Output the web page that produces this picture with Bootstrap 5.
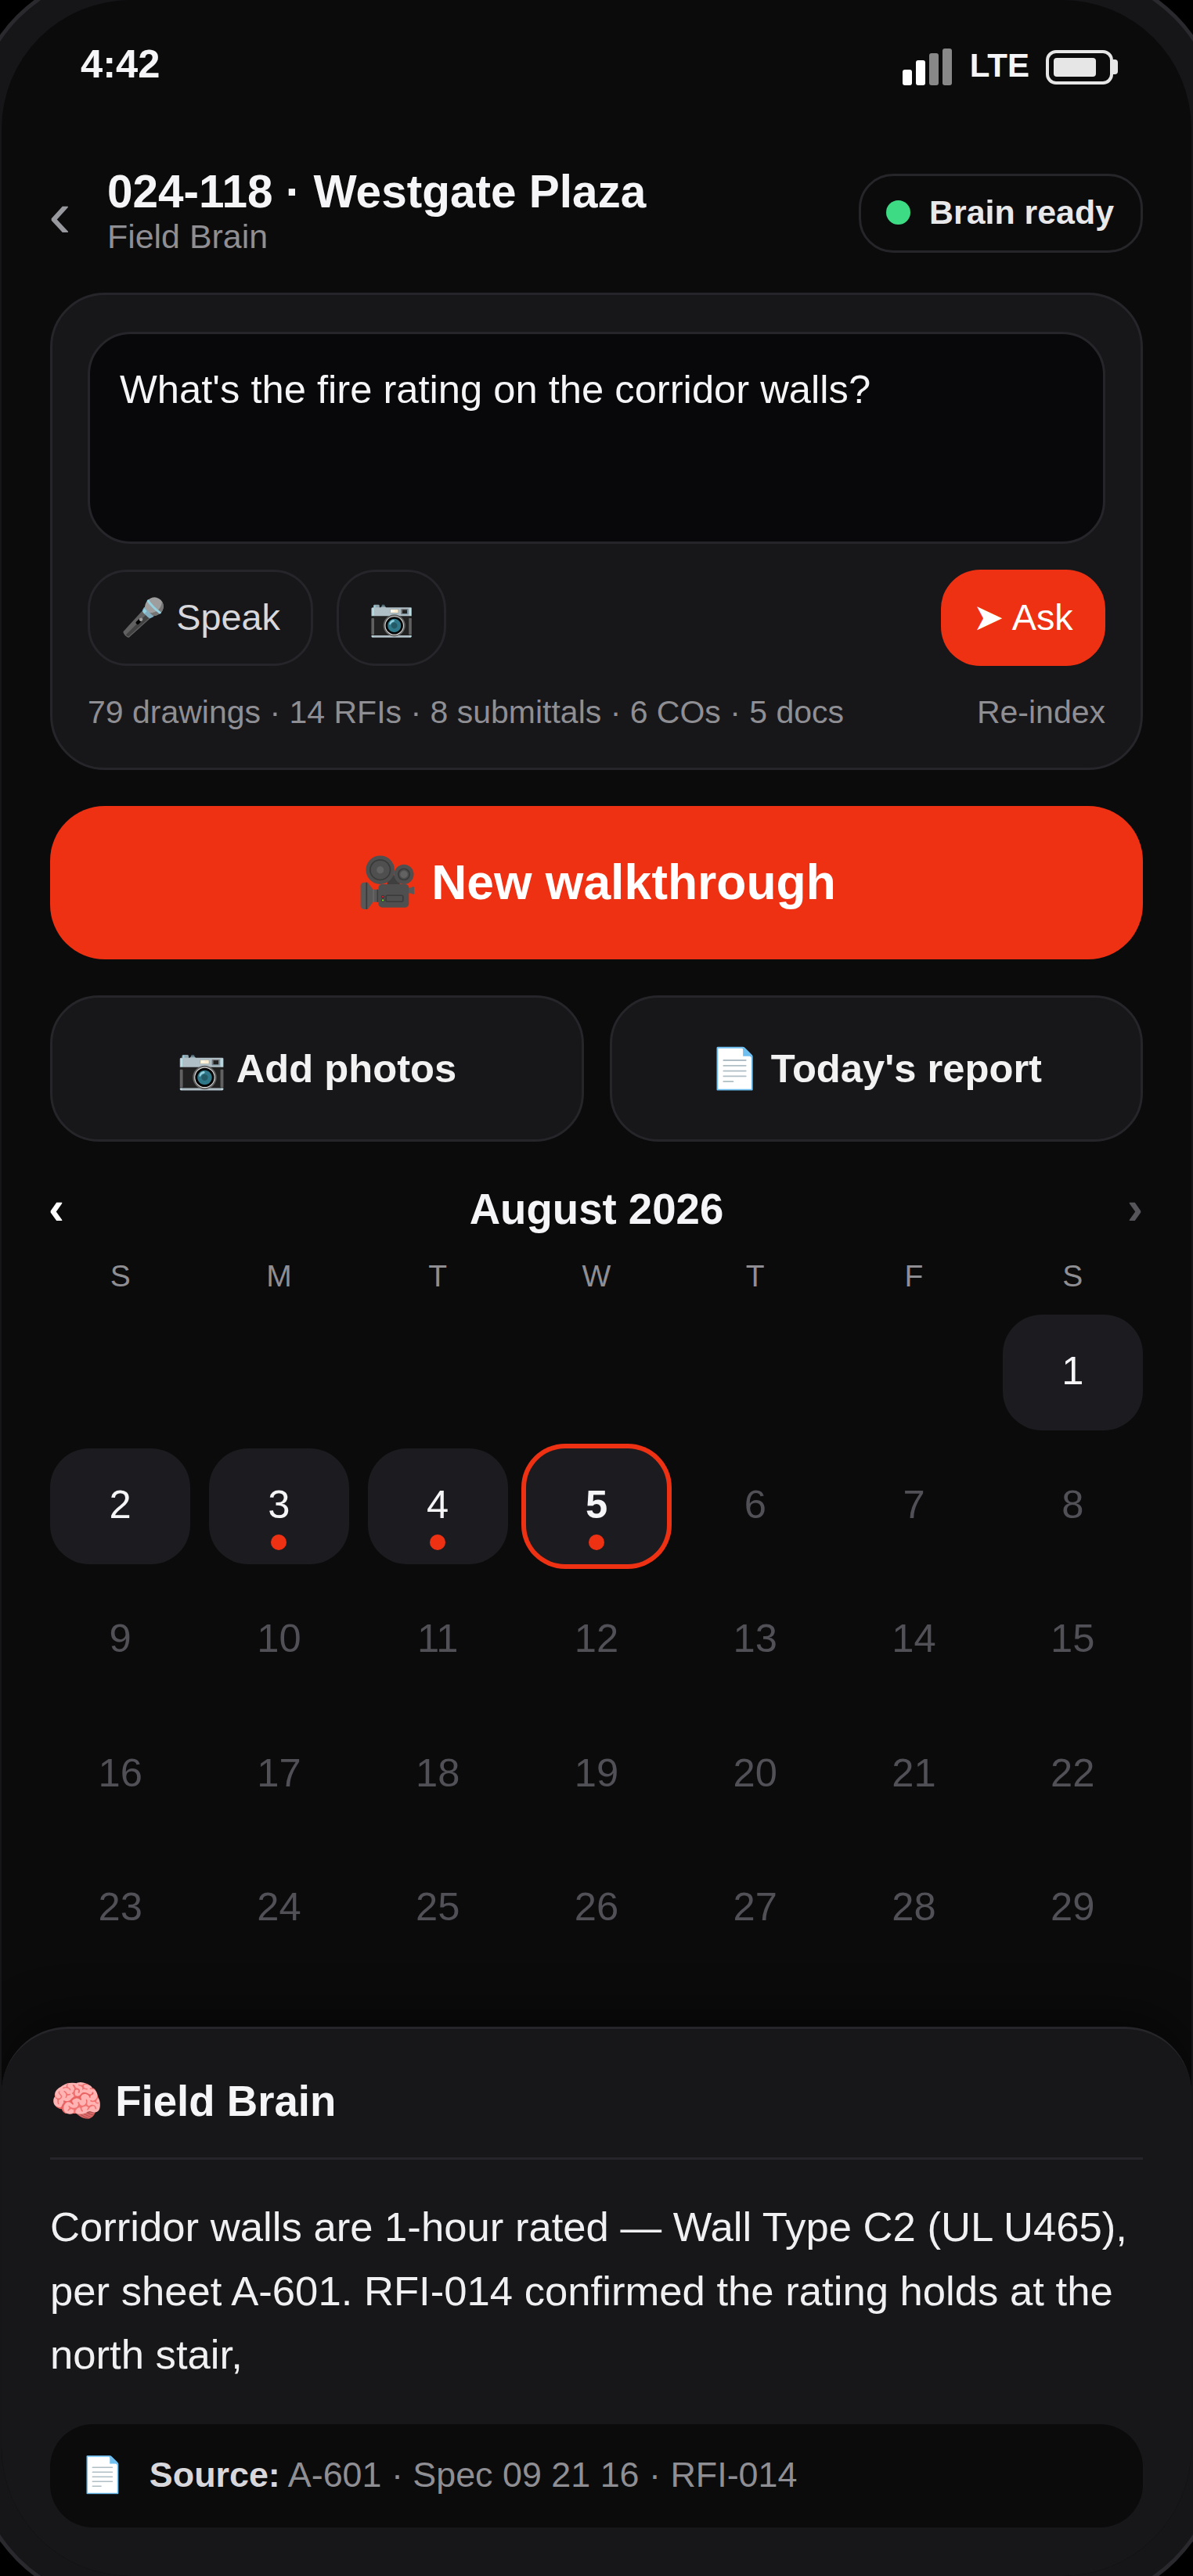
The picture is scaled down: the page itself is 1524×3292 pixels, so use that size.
<!DOCTYPE html>
<html lang="en">
<head>
    <meta charset="UTF-8">
    <meta name="viewport" content="width=device-width, initial-scale=1.0">
    <title>Field Brain</title>
    <link href="https://cdn.jsdelivr.net/npm/bootstrap@5.3.0/dist/css/bootstrap.min.css" rel="stylesheet">
    <style>
        html, body { height: 100%; overflow: hidden; }
        body {
            background: #000;
            color: #f5f5f7;
            font-family: "Liberation Sans", "Noto Color Emoji", sans-serif;
        }
        /* phone shell: the rim runs off the edges of the picture */
        .phone {
            width: 1520px;
            height: 3292px;
            background: #0b0b0c;
            border-radius: 165px;
            overflow: hidden;
            box-shadow: 0 0 0 36px #161619, 0 0 0 41px #2a2a2e;
        }
        .page-pad { padding: 0 62px; }

        /* status bar */
        .status-bar { height: 222px; padding: 55px 94px 0 101px; }
        .clock { font-size: 50.7px; font-weight: 700; line-height: 58px; margin-top: -2px; color: #f5f5f7; }
        .status-right { margin-top: 7px; }
        .signal { height: 47px; gap: 5px; margin-right: 23px; }
        .signal i { width: 12px; background: #fff; border-radius: 3px; }
        .signal i.off { background: #888; }
        .net { font-size: 42px; font-weight: 700; line-height: 50px; margin: -4px 21px 0 0; color: #f5f5f7; }
        .batt { width: 86px; height: 44px; border: 4px solid #e6e6e6; border-radius: 13px; padding: 6px; }
        .batt i { display: block; width: 54px; height: 24px; background: #e6e6e6; border-radius: 4px; }
        .batt-nub { width: 6px; height: 19px; background: #e6e6e6; border-radius: 0 4px 4px 0; }

        /* header */
        .head-row { height: 101px; margin-bottom: 51px; }
        .back-arrow { width: 73px; font-size: 86px; line-height: 86px; color: #98989f; margin: 0 2px 0 -2px; }
        .proj-name { font-size: 58.5px; font-weight: 700; line-height: 68px; margin-top: -8px; }
        .proj-sub { font-size: 42.9px; line-height: 50px; margin-top: -2px; color: #8e8e93; }
        .brain-pill {
            height: 101px;
            padding: 0 34px 2px 32px;
            gap: 24px;
            font-size: 42.9px;
            font-weight: 700;
            color: #e8e8ea;
            border: 3px solid #26262a;
            border-radius: 44px;
        }
        .green-dot { width: 31px; height: 31px; background: #3ddc84; border-radius: 50%; }

        /* ask card */
        .ask-card {
            height: 610px;
            padding: 47px 45px;
            background: #17171a;
            border: 3px solid #26262a;
            border-radius: 70px;
            margin-bottom: 46px;
        }
        .ask-input.form-control {
            height: 271px;
            padding: 41px 38px 0;
            font-size: 50.7px;
            line-height: 1.2;
            color: #f5f5f7;
            background: #08080a;
            border: 3px solid #26262a;
            border-radius: 55px;
            margin-bottom: 33px;
        }
        .ghost-btn.btn {
            height: 123px;
            padding: 0 39px;
            font-size: 46.8px;
            line-height: 1;
            color: #d8d8dc;
            background: transparent;
            border: 3px solid #26262a;
            border-radius: 50px;
        }
        .ghost-btn.cam-btn { margin-left: 30px; padding: 0 38px; }
        .ask-btn.btn {
            height: 123px;
            width: 210px;
            padding: 0;
            font-size: 46.8px;
            line-height: 1;
            color: #fff;
            background: #ee3113;
            border: 0;
            border-radius: 50px;
        }
        .meta-row { margin-top: 34px; font-size: 41px; line-height: 50px; color: #8e8e93; }

        /* big actions */
        .walk-btn.btn {
            height: 196px;
            font-size: 62.4px;
            font-weight: 700;
            color: #fff;
            background: #ee3113;
            border: 0;
            border-radius: 70px;
            margin-bottom: 46px;
        }
        .tile-row { gap: 33px; }
        .tile-btn.btn {
            height: 187px;
            padding: 2px 0 0;
            font-size: 50.7px;
            font-weight: 700;
            color: #f2f2f2;
            background: #17171a;
            border: 3px solid #26262a;
            border-radius: 62px;
        }

        /* calendar */
        .month-row { margin-top: 52px; height: 70px; font-size: 54.6px; font-weight: 700; line-height: 70px; }
        .month-arrow { font-size: 60px; line-height: 66px; width: 16px; color: #fff; margin: 0 6px 4px -2px; }
        .month-arrow.dim { color: #55555a; text-align: right; margin: 0 4px 4px 0; }
        .cal-grid { display: grid; grid-template-columns: repeat(7, 1fr); column-gap: 23.4px; }
        .dow-row { margin-top: 31px; height: 38px; font-size: 39px; line-height: 38px; color: #8e8e93; text-align: center; }
        .day-rows { margin-top: 30px; row-gap: 23px; }
        .day-cell {
            position: relative;
            height: 148.2px;
            border-radius: 50px;
            text-align: center;
            font-size: 50.7px;
            line-height: 144px;
            color: #505056;
        }
        .day-cell.has-data { background: #1c1c20; color: #f5f5f7; }
        .day-cell.picked { font-weight: 700; box-shadow: 0 0 0 6px #ee3113; }
        .day-cell.has-dot::after {
            content: "";
            position: absolute;
            left: 50%;
            bottom: 18px;
            width: 20px;
            height: 20px;
            margin-left: -10px;
            background: #ee3113;
            border-radius: 50%;
        }

        /* answer sheet */
        .answer-sheet {
            height: 702px;
            padding: 0 62px;
            background: #17171a;
            border-top: 3px solid #26262a;
            border-radius: 85px 85px 0 0;
            box-shadow: 0 -16px 60px rgba(0, 0, 0, .45);
        }
        .sheet-title {
            height: 167px;
            padding-top: 58px;
            font-size: 54.6px;
            font-weight: 700;
            line-height: 70px;
            border-bottom: 3px solid #26262a;
        }
        .answer-text { margin: 45px 0 48px; font-size: 52.65px; line-height: 81.6px; color: #f0f0f2; }
        .source-box {
            height: 132px;
            padding: 0 39px 2px;
            gap: 32px;
            font-size: 44.85px;
            color: #8e8e93;
            background: #0b0b0c;
            border-radius: 55px;
        }
        .source-box b { color: #d8d8dc; }
    </style>
</head>
<body>
    <div class="phone d-flex flex-column mx-auto">
        <!-- status bar -->
        <div class="status-bar d-flex justify-content-between align-items-start flex-shrink-0">
            <div class="clock">4:42</div>
            <div class="status-right d-flex align-items-center">
                <div class="signal d-flex align-items-end">
                    <i style="height:20px"></i>
                    <i style="height:32px"></i>
                    <i class="off" style="height:41px"></i>
                    <i class="off" style="height:47px"></i>
                </div>
                <div class="net">LTE</div>
                <div class="batt"><i></i></div>
                <div class="batt-nub"></div>
            </div>
        </div>

        <!-- header -->
        <div class="head-row page-pad d-flex align-items-center flex-shrink-0">
            <div class="back-arrow">‹</div>
            <div class="flex-grow-1">
                <div class="proj-name">024-118 · Westgate Plaza</div>
                <div class="proj-sub">Field Brain</div>
            </div>
            <div class="brain-pill d-flex align-items-center">
                <span class="green-dot"></span>
                <span>Brain ready</span>
            </div>
        </div>

        <div class="page-pad flex-shrink-0">
            <!-- ask -->
            <div class="ask-card">
                <div class="ask-input form-control">What's the fire rating on the corridor walls?</div>
                <div class="d-flex">
                    <button class="ghost-btn btn" type="button">🎤 Speak</button>
                    <button class="ghost-btn btn cam-btn" type="button">📷</button>
                    <button class="ask-btn btn ms-auto" type="button">➤ Ask</button>
                </div>
                <div class="meta-row d-flex justify-content-between">
                    <span>79 drawings · 14 RFIs · 8 submittals · 6 COs · 5 docs</span>
                    <span>Re-index</span>
                </div>
            </div>

            <button class="walk-btn btn w-100 d-block" type="button">🎥 New walkthrough</button>
            <div class="tile-row d-flex">
                <button class="tile-btn btn flex-fill w-50" type="button">📷 Add photos</button>
                <button class="tile-btn btn flex-fill w-50" type="button">📄 Today's report</button>
            </div>

            <!-- calendar -->
            <div class="month-row d-flex justify-content-between align-items-center">
                <span class="month-arrow">‹</span>
                <span>August 2026</span>
                <span class="month-arrow dim">›</span>
            </div>
            <div class="cal-grid dow-row">
                <div>S</div><div>M</div><div>T</div><div>W</div><div>T</div><div>F</div><div>S</div>
            </div>
            <div class="cal-grid day-rows">
                <div></div><div></div><div></div><div></div><div></div><div></div>
                <div class="day-cell has-data">1</div>
                <div class="day-cell has-data">2</div>
                <div class="day-cell has-data has-dot">3</div>
                <div class="day-cell has-data has-dot">4</div>
                <div class="day-cell has-data has-dot picked">5</div>
                <div class="day-cell">6</div>
                <div class="day-cell">7</div>
                <div class="day-cell">8</div>
                <div class="day-cell">9</div>
                <div class="day-cell">10</div>
                <div class="day-cell">11</div>
                <div class="day-cell">12</div>
                <div class="day-cell">13</div>
                <div class="day-cell">14</div>
                <div class="day-cell">15</div>
                <div class="day-cell">16</div>
                <div class="day-cell">17</div>
                <div class="day-cell">18</div>
                <div class="day-cell">19</div>
                <div class="day-cell">20</div>
                <div class="day-cell">21</div>
                <div class="day-cell">22</div>
                <div class="day-cell">23</div>
                <div class="day-cell">24</div>
                <div class="day-cell">25</div>
                <div class="day-cell">26</div>
                <div class="day-cell">27</div>
                <div class="day-cell">28</div>
                <div class="day-cell">29</div>
            </div>
        </div>

        <!-- answer sheet -->
        <div class="answer-sheet flex-shrink-0 mt-auto">
            <div class="sheet-title">🧠 Field Brain</div>
            <div class="answer-text">Corridor walls are 1-hour rated — Wall Type C2 (UL U465), per sheet A-601. RFI-014 confirmed the rating holds at the north stair,</div>
            <div class="source-box d-flex align-items-center">
                <span>📄</span>
                <span><b>Source:</b> A-601 · Spec 09 21 16 · RFI-014</span>
            </div>
        </div>
    </div>
</body>
</html>
